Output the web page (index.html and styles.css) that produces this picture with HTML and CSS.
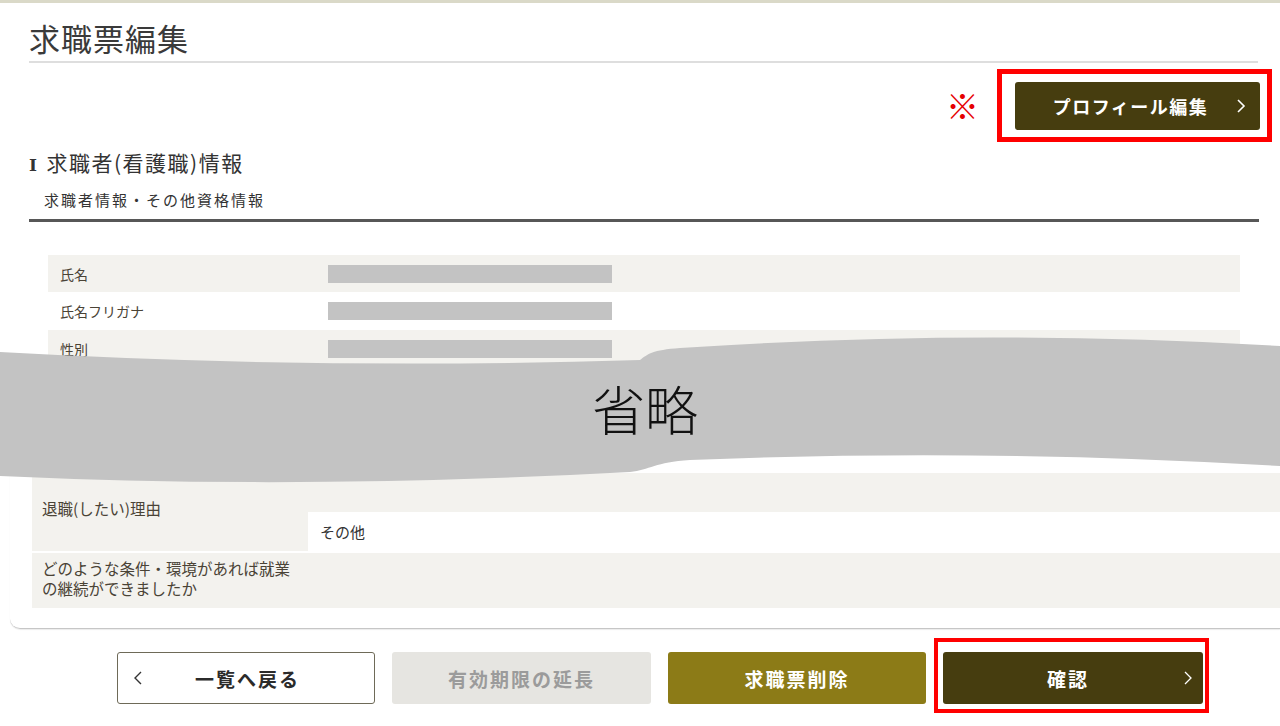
FILE: index.html
```html
<!DOCTYPE html>
<html lang="ja">
<head>
<meta charset="utf-8">
<title>求職票編集</title>
<link rel="stylesheet" href="styles.css">
</head>
<body>
<div class="topline"></div>
<header class="page-head">
  <h1 class="page-title">求職票編集</h1>
</header>

<div class="actions">
  <span class="note">※</span>
  <div class="hl hl-profile">
    <button class="btn btn-dark btn-profile" type="button">
      <span class="btn-spacer"></span>
      <span class="btn-label">プロフィール編集</span>
      <span class="btn-icon-r">
        <svg width="10" height="16" viewBox="0 0 10 16"><polyline points="2,2 8,8 2,14" fill="none" stroke="#fff" stroke-width="1.6"/></svg>
      </span>
    </button>
  </div>
</div>

<section class="sec-head">
  <h2 class="sec-title"><span class="roman">Ⅰ</span>求職者(看護職)情報</h2>
  <div class="sec-sub">求職者情報・その他資格情報</div>
</section>

<div class="table1">
  <div class="row alt"><div class="lbl">氏名</div><div class="val"><span class="mask"></span></div></div>
  <div class="row row-mid"><div class="lbl">氏名フリガナ</div><div class="val"><span class="mask"></span></div></div>
  <div class="row alt"><div class="lbl">性別</div><div class="val"><span class="mask"></span></div></div>
</div>

<div class="card2">
  <div class="grid2">
    <div class="lbl2 lbl-span">退職(したい)理由</div>
    <div class="val2 alt"></div>
    <div class="val2 val-white">その他</div>
  </div>
  <div class="grid3">
    <div class="lbl3">どのような条件・環境があれば就業<br>の継続ができましたか</div>
    <div class="val3"></div>
  </div>
</div>

<div class="btnrow">
  <button class="btn btn-back" type="button">
    <span class="btn-icon-l">
      <svg width="10" height="16" viewBox="0 0 10 16"><polyline points="8,2 2,8 8,14" fill="none" stroke="#333" stroke-width="1.4"/></svg>
    </span>
    <span class="btn-label">一覧へ戻る</span>
    <span class="btn-spacer"></span>
  </button>
  <button class="btn btn-gray" type="button">有効期限の延長</button>
  <button class="btn btn-olive" type="button">求職票削除</button>
  <div class="hl hl-confirm">
    <button class="btn btn-dark btn-confirm" type="button">
      <span class="btn-spacer"></span>
      <span class="btn-label">確認</span>
      <span class="btn-icon-r">
        <svg width="10" height="16" viewBox="0 0 10 16"><polyline points="2,2 8,8 2,14" fill="none" stroke="#fff" stroke-width="1.3"/></svg>
      </span>
    </button>
  </div>
</div>

<div class="omit">
  <svg class="omit-shape" width="1280" height="160" viewBox="0 0 1280 160">
    <path d="M0,22 Q320,40 640,30 C648,24 652,20 680,18 Q980,-2 1280,16 L1280,136 Q980,118 690,130 C655,132 650,140 630,142 Q300,160 0,146 Z" fill="#c3c3c3"/>
  </svg>
  <span class="omit-text">省略</span>
</div>
</body>
</html>
```

FILE: styles.css
```css
* { box-sizing: border-box; }

body {
  margin: 0;
  width: 1280px;
  height: 726px;
  overflow: hidden;
  position: relative;
  background: #fff;
  color: #333;
  font-family: "Noto Sans CJK JP", "Noto Sans", sans-serif;
}

.topline {
  height: 3px;
  background: #dad9c8;
}

.page-head {
  margin: 0 22px 0 29px;
  padding-top: 14px;
  border-bottom: 2px solid #dedede;
}

.page-title {
  margin: 0;
  padding-bottom: 3px;
  font-size: 31px;
  font-weight: 400;
  line-height: 41px;
  letter-spacing: 1px;
  color: #3a3a3a;
}

.actions {
  display: flex;
  justify-content: flex-end;
  align-items: center;
  gap: 18px;
  margin-top: 6px;
  padding-right: 8px;
}

.note {
  color: #e60000;
  font-size: 33px;
  line-height: 1;
}

.hl {
  border: 4px solid #ff0000;
}

.hl-profile {
  border-width: 5px;
  padding: 8px 7px 7px 13px;
}

.btn {
  font-family: inherit;
  font-weight: 700;
  font-size: 19px;
  letter-spacing: 2px;
  border: none;
  border-radius: 3px;
  height: 52px;
  width: 258px;
  padding: 0;
  cursor: pointer;
}

.btn-dark {
  background: #463d0f;
  color: #fff;
  display: grid;
  grid-template-columns: 1fr auto 1fr;
  align-items: center;
}

.btn-profile {
  width: 245px;
  height: 48px;
  font-size: 18px;
  letter-spacing: 1.5px;
  padding-right: 14px;
}

.btn-icon-r {
  display: flex;
  justify-content: flex-end;
}

.btn-icon-l {
  display: flex;
  justify-content: flex-start;
}

.btn-icon-r svg,
.btn-icon-l svg { display: block; }

.sec-head {
  margin: 6px 21px 0 29px;
  padding-bottom: 9px;
  border-bottom: 3px solid #575757;
}

.sec-title {
  margin: 0;
  font-size: 21px;
  font-weight: 400;
  line-height: 28px;
  letter-spacing: 1.5px;
  color: #333;
}

.roman {
  font-family: "DejaVu Serif", "Liberation Serif", serif;
  font-weight: 700;
  font-size: 17px;
  margin-right: 8px;
}

.sec-sub {
  margin-top: 11px;
  padding-left: 15px;
  font-size: 15px;
  line-height: 20px;
  letter-spacing: 2px;
  color: #333;
}

.table1 {
  margin: 33px 0 0 48px;
  width: 1192px;
}

.row {
  display: grid;
  grid-template-columns: 280px 1fr;
  align-items: center;
  height: 37px;
}

.row-mid { height: 38px; }

.alt { background: #f3f2ee; }

.lbl {
  padding-left: 12px;
  font-size: 14px;
  color: #4a4336;
}

.mask {
  display: block;
  width: 284px;
  height: 18px;
  background: #c3c3c3;
}

.card2 {
  margin: 106px 0 0 10px;
  padding: 0 0 20px 22px;
  border-bottom: 1px solid #c6c6c6;
  border-bottom-left-radius: 10px;
  box-shadow: 0 1px 1px rgba(0, 0, 0, 0.08);
}

.grid2 {
  display: grid;
  grid-template-columns: 276px 1fr;
  grid-template-rows: 39px 39px;
}

.lbl2 {
  background: #f3f2ee;
  padding: 25px 0 0 10px;
  font-size: 15.5px;
  line-height: 20px;
  color: #4a4336;
}

.lbl-span { grid-row: 1 / span 2; }

.val2 { display: flex; align-items: center; }

.val-white {
  background: #fff;
  padding-left: 12px;
  font-size: 15px;
  color: #333;
}

.grid3 {
  display: grid;
  grid-template-columns: 276px 1fr;
  height: 55px;
  margin-top: 2px;
  background: #f3f2ee;
}

.lbl3 {
  padding: 6px 0 0 10px;
  font-size: 15.5px;
  line-height: 19.5px;
  color: #4a4336;
}

.btnrow {
  display: flex;
  align-items: flex-start;
  gap: 17px;
  margin-top: 23px;
  padding-left: 117px;
}

.btn-back {
  background: #fff;
  border: 1px solid #6e6a58;
  color: #2b2b2b;
  display: grid;
  grid-template-columns: 1fr auto 1fr;
  align-items: center;
  padding: 0 12px 0 15px;
}

.btn-gray {
  background: #e6e5e1;
  color: #9b9b9b;
  width: 259px;
}

.btn-olive {
  background: #8c7b17;
  color: #fff;
}

.hl-confirm {
  margin: -14px 0 0 -9px;
  padding: 10px 2px 5px 5px;
}

.btn-confirm {
  width: 260px;
  padding-right: 10px;
}

.omit {
  position: absolute;
  left: 0;
  top: 330px;
  width: 1280px;
  height: 160px;
}

.omit-shape {
  display: block;
}

.omit-text {
  position: absolute;
  left: 592px;
  top: 52px;
  font-size: 53px;
  font-weight: 300;
  line-height: 1;
  color: #111;
}
```
